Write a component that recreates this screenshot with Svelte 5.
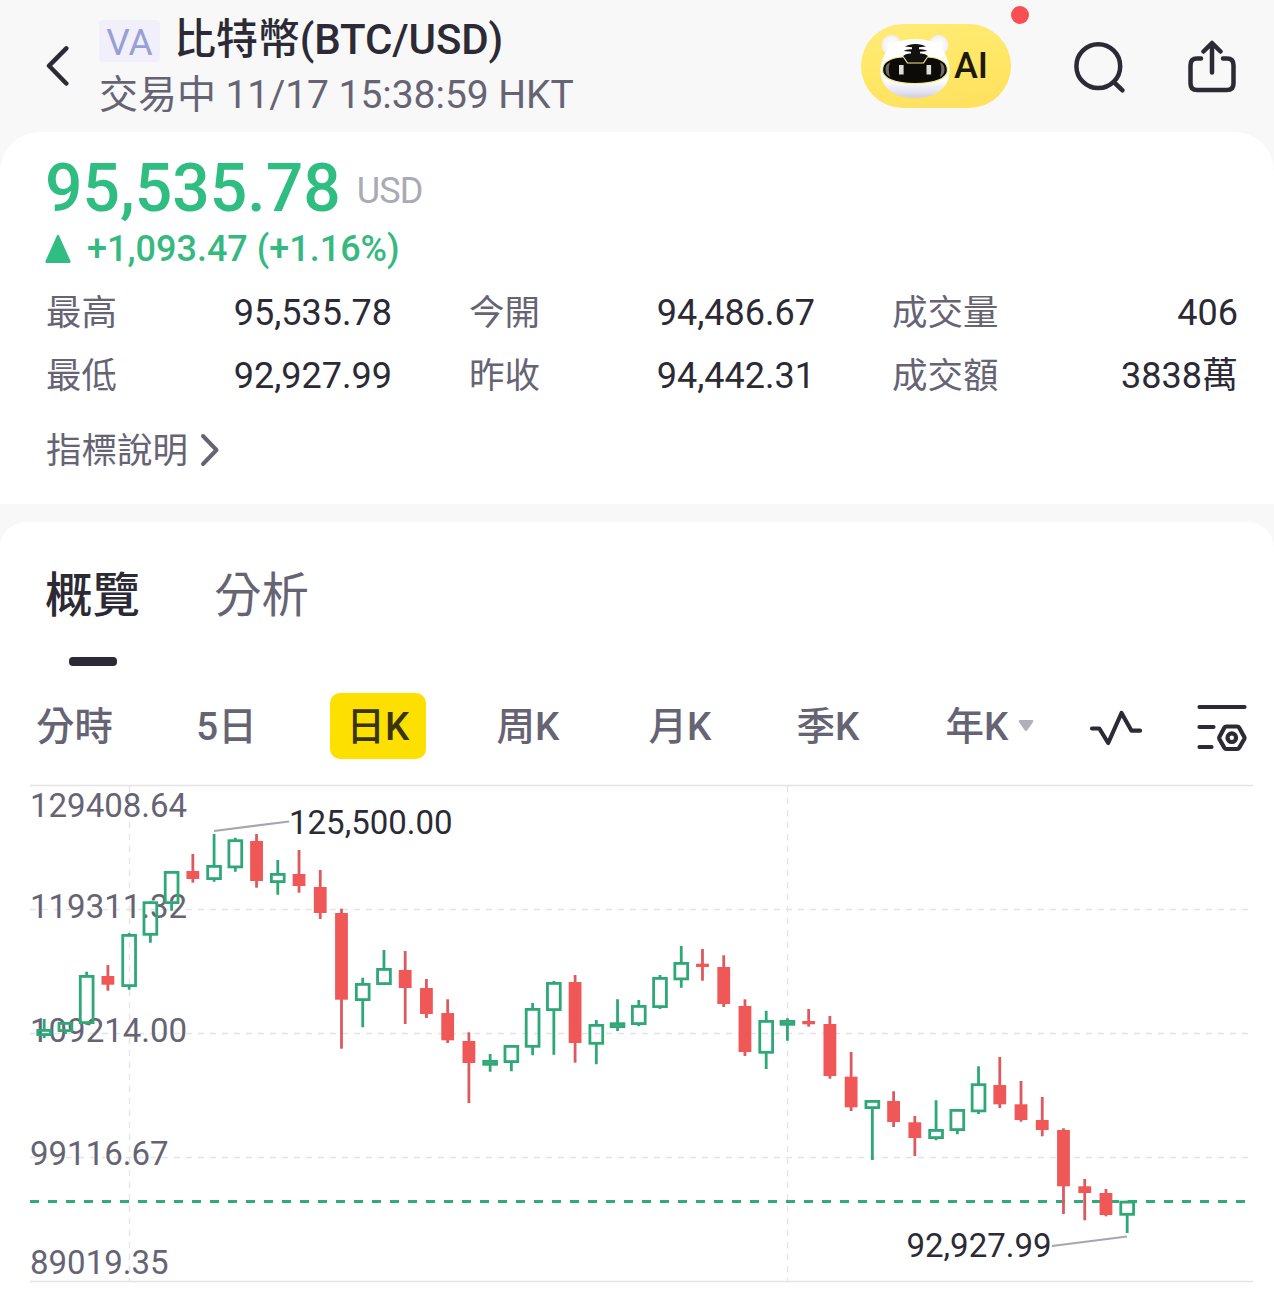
<script>
  const stats = [
    ['最高', '95,535.78'],
    ['今開', '94,486.67'],
    ['成交量', '406'],
    ['最低', '92,927.99'],
    ['昨收', '94,442.31'],
    ['成交額', '3838萬'],
  ];

  const periods = ['分時', '5日', '日K', '周K', '月K', '季K', '年K'];
  let period = $state('日K');

  const tabs = ['概覽', '分析'];
  let tab = $state('概覽');

  // u/d, high, body top, body bottom, low
  const candles = [
    ['u', 1019, 1029, 1036, 1038],
    ['u', 1022, 1022, 1032, 1034],
    ['u', 971.7, 975, 1024, 1025],
    ['d', 965, 976, 984.7, 990.7],
    ['u', 933, 934, 987, 989.7],
    ['u', 901.3, 901.3, 935.7, 942.7],
    ['u', 871, 871, 904, 910.7],
    ['d', 854, 871, 879, 882.7],
    ['u', 834, 865, 880, 881.7],
    ['u', 837.7, 839.3, 868.3, 871.7],
    ['d', 834, 841, 881, 887.7],
    ['u', 860, 873, 883, 894.7],
    ['d', 850, 874, 886, 892.7],
    ['d', 870, 887, 913, 919],
    ['d', 908.7, 913, 999.7, 1048.7],
    ['u', 977.7, 983, 1001, 1027.3],
    ['u', 950, 968, 985, 985],
    ['d', 951, 970, 988, 1024],
    ['d', 979, 988, 1014, 1018],
    ['d', 999.3, 1013, 1040.3, 1043],
    ['d', 1032.3, 1041, 1063, 1103],
    ['u', 1054, 1060, 1065.7, 1071.7],
    ['u', 1045, 1045, 1063, 1071.3],
    ['u', 1003, 1008, 1047.7, 1055.3],
    ['u', 981, 982, 1011, 1054.7],
    ['d', 975, 982, 1043, 1062.7],
    ['u', 1020, 1024, 1044.7, 1064.3],
    ['u', 999.3, 1022.3, 1028, 1031],
    ['u', 1000, 1005, 1025, 1026.3],
    ['u', 975, 977, 1008, 1009],
    ['u', 946, 962, 980.3, 987.7],
    ['d', 949, 963.7, 967, 980.7],
    ['d', 955.3, 967, 1004, 1007],
    ['d', 999.3, 1006, 1052, 1056],
    ['u', 1010.7, 1020, 1053.7, 1069],
    ['u', 1018.3, 1020, 1025.7, 1040.7],
    ['d', 1009, 1021, 1024.3, 1026.7],
    ['d', 1016, 1024, 1076, 1078.7],
    ['d', 1052, 1076.7, 1107.3, 1111],
    ['u', 1100, 1100, 1109, 1160],
    ['d', 1091.3, 1101, 1122, 1127],
    ['d', 1116, 1122.3, 1138, 1156],
    ['u', 1100.3, 1129, 1139, 1140.3],
    ['u', 1109, 1109, 1131, 1134.3],
    ['u', 1066.3, 1083.3, 1112.3, 1114],
    ['d', 1057, 1085, 1104.3, 1108],
    ['d', 1081, 1104.3, 1120, 1121.7],
    ['d', 1097, 1120, 1130, 1136.3],
    ['d', 1128.3, 1130, 1186.3, 1214],
    ['d', 1179, 1186.3, 1193, 1220.3],
    ['d', 1189, 1193, 1215, 1216.3],
    ['u', 1200.7, 1200.7, 1215.7, 1233],
  ].map(([dir, high, top, bottom, low], i) => ({ dir, high, top, bottom, low, x: 44.2 + i * 21.235 }));

  const axis = [
    ['129408.64', 817],
    ['119311.32', 918],
    ['109214.00', 1042],
    ['99116.67', 1165],
    ['89019.35', 1274],
  ];
</script>

<div class="page">
  <header>
    <svg class="back" width="24" height="42" viewBox="0 0 24 42"><path d="M20.300 3.300 3 20.800 20.300 38.500" /></svg>
    <div class="titles">
      <div class="title"><span class="badge">VA</span><h1>比特幣(BTC/USD)</h1></div>
      <div class="status">交易中 11/17 15:38:59 HKT</div>
    </div>
    <button class="ai" aria-label="AI">
      <svg width="76" height="70" viewBox="0 0 76 70">
        <defs>
          <linearGradient id="head" x1="0" y1="0" x2="0" y2="1">
            <stop offset="0.7" stop-color="#fff" />
            <stop offset="0.88" stop-color="#e6e5f3" />
            <stop offset="1" stop-color="#d3d0de" />
          </linearGradient>
          <radialGradient id="ear">
            <stop offset="0.3" stop-color="#fff" />
            <stop offset="1" stop-color="#efedf2" />
          </radialGradient>
        </defs>
        <circle cx="13.500" cy="14" r="10" fill="url(#ear)" />
        <circle cx="60.500" cy="14" r="10" fill="url(#ear)" />
        <path d="M37 8C53 8 64 13 68 25C72 33 72.500 42 70 49C65 61 54 67 37 67S9 61 4 49C1.500 42 2 33 6 25C10 13 21 8 37 8Z" fill="url(#head)" />
        <path d="M24 26H50C62 27 69.500 31 69.500 39C69.500 48 56 52.500 37 52.500S4.500 48 4.500 39C4.500 31 12 27 24 26Z" fill="#0c0b08" stroke="#f6ee8c" stroke-width="1.200" />
        <path d="M12 31.500Q7.500 33 7.500 38.500T12 46Q9.500 38 12 31.500ZM62 31.500Q66.500 33 66.500 38.500T62 46Q64.500 38 62 31.500Z" fill="#6d6c68" />
        <path d="M25.500 25 29.500 32H45.500L49.500 25Z" fill="#fff" />
        <path d="M25.500 26 29.500 32H45.500L49.500 26" fill="#0c0b08" stroke="#f6ee8c" stroke-width="1.200" />
        <path d="M27 15.500Q31 13 37.500 13T48 15.500L41 16.300V18.300Q46 17.800 49.500 20L42 20.800V22.500Q47 22 50 25L44.500 30H30.500L25 25Q28 22 33 22.500V20.800L25.500 20Q29 17.800 34 18.300V16.300Z" fill="#121110" />
        <rect x="21" y="34" width="4.600" height="9.500" fill="#dcdcd8" />
        <rect x="48.500" y="34" width="4.600" height="9.500" fill="#dcdcd8" />
      </svg>
      <span>AI</span>
      <i class="dot"></i>
    </button>
    <svg class="search" width="56" height="56" viewBox="0 0 56 56"><circle cx="25.300" cy="25.200" r="21.900" /><path d="M41.300 41.500 49.500 49.300" /></svg>
    <svg class="share" width="50" height="56" viewBox="0 0 50 56">
      <path d="M14 18.500H10Q3.500 18.500 3.500 25V43.500Q3.500 50 10 50H40Q46.500 50 46.500 43.500V25Q46.500 18.500 40 18.500H36" />
      <path d="M25 32.500V4M16.500 11.500 25 3 33.500 11.500" />
    </svg>
  </header>

  <section class="quote">
    <div class="price"><strong>95,535.78</strong><span>USD</span></div>
    <div class="change">
      <svg width="26" height="29" viewBox="0 0 26 29"><path d="M12 1.500Q13 0 14 1.500L25.500 27Q26 29 24 29H2Q0 29 .5 27Z" /></svg>
      +1,093.47 (+1.16%)
    </div>
    <dl>
      {#each stats as [label, value]}
        <div><dt>{label}</dt><dd>{value}</dd></div>
      {/each}
    </dl>
    <div class="note">
      <span>指標說明</span>
      <svg width="20" height="34" viewBox="0 0 20 34"><path d="M3 3 16.500 17 3 31" /></svg>
    </div>
  </section>

  <section class="detail">
    <nav class="tabs">
      {#each tabs as name}
        <button class:active={tab === name} onclick={() => (tab = name)}>{name}</button>
      {/each}
    </nav>

    <div class="toolbar">
      <div class="periods">
        {#each periods as name}
          <button class:active={period === name} onclick={() => (period = name)}>
            {name}{#if name === '年K'}<svg class="caret" width="16" height="13" viewBox="0 0 16 13"><path d="M2 1H14Q16 1 15 3L9.500 11Q8 13 6.500 11L1 3Q0 1 2 1Z" /></svg>{/if}
          </button>
        {/each}
      </div>
      <svg class="tool pulse" width="56" height="40" viewBox="0 0 56 40"><path d="M4 20.500H11.300L20.200 35 33.500 5 43.500 22.700H52" /></svg>
      <svg class="tool settings" width="52" height="50" viewBox="0 0 52 50">
        <path d="M3.500 5H48.500M3.500 25H17.500M3.500 45H15.500" />
        <path d="M30.500 24.500H41Q42.500 24.500 43.200 25.800L48.300 35Q48.800 36 48.300 37L43.200 45.800Q42.500 47 41 47H30.500Q29 47 28.300 45.800L23.400 37Q22.900 36 23.400 35L28.300 25.800Q29 24.500 30.500 24.500Z" />
        <circle cx="35.800" cy="35.700" r="4.300" />
      </svg>
    </div>

    <svg class="chart" width="1274" height="507" viewBox="0 784 1274 507">
      <g class="grid">
        <path class="solid" d="M30 785.500H1253M30 1281.500H1253" />
        <path d="M30 909.500H1248M30 1033.500H1248M30 1157.500H1248" />
        <path d="M129.500 786V1281M787.500 786V1281" />
      </g>
      {#each axis as [label, y]}
        <text x="30" {y}>{label}</text>
      {/each}
      <path class="last" d="M30 1201.500H1246" />
      {#each candles as c}
        <g class={c.dir}>
          {#if c.dir === 'u'}
            <path d="M{c.x} {c.high}V{c.top + 1}M{c.x} {c.bottom - 1}V{c.low}" />
            <rect x={c.x - 6.4} y={c.top + 1.4} width="12.800" height={c.bottom - c.top - 2.8} />
          {:else}
            <path d="M{c.x} {c.high}V{c.low}" />
            <rect x={c.x - 6.4} y={c.top} width="12.800" height={c.bottom - c.top} />
          {/if}
        </g>
      {/each}
      <path class="leader" d="M214 831 289 821.500M1052 1246 1127 1236.500" />
      <text class="mark" x="289" y="834">125,500.00</text>
      <text class="mark" x="906.500" y="1257">92,927.99</text>
    </svg>
  </section>
</div>

<style>
  :global(body) {
    margin: 0;
    background: #f8f8f9;
  }
  .page {
    width: 1274px;
    height: 1291px;
    overflow: hidden;
    font-family: Roboto, 'Noto Sans CJK TC', sans-serif;
    color: #2b2a35;
  }
  button {
    padding: 0;
    border: 0;
    background: none;
    font: inherit;
    color: inherit;
  }
  svg {
    flex: none;
    fill: none;
    stroke-linecap: round;
    stroke-linejoin: round;
  }

  header {
    display: flex;
    align-items: flex-start;
    height: 132px;
  }
  .back,
  .search,
  .share {
    stroke: #2b2a35;
    stroke-width: 4.5;
  }
  .back {
    margin: 45px 0 0 46px;
  }
  .titles {
    width: 762px;
    margin: 15px 0 0 29px;
  }
  .title {
    display: flex;
    align-items: center;
    height: 52px;
  }
  .badge {
    width: 61px;
    height: 42px;
    border-radius: 4px;
    background: #f1f0fa;
    font-size: 37px;
    line-height: 46px;
    text-align: center;
    color: #979fd6;
  }
  h1 {
    margin: 0 0 3px 14px;
    font-size: 42px;
    font-weight: 500;
    line-height: 50px;
    letter-spacing: -0.1px;
  }
  .status {
    font-size: 39px;
    line-height: 56px;
    letter-spacing: -0.05px;
    color: #666474;
  }
  .ai {
    position: relative;
    display: flex;
    align-items: center;
    box-sizing: border-box;
    width: 150px;
    height: 84px;
    margin-top: 24px;
    padding-left: 17px;
    border-radius: 42px;
    background: linear-gradient(170deg, #ffec78, #ffe766 50%, #ffdf5e);
    font-size: 36px;
    font-weight: 500;
    color: #1d1a0c;
  }
  .dot {
    position: absolute;
    top: -18px;
    right: -18px;
    width: 18px;
    height: 18px;
    border-radius: 50%;
    background: #fa4f52;
  }
  .search {
    margin: 41px 0 0 62px;
  }
  .share {
    margin: 40px 0 0 58px;
  }

  .quote {
    box-sizing: border-box;
    height: 372px;
    padding: 28px 36px 0 45px;
    border-radius: 40px 40px 0 0;
    background: #fff;
  }
  .price {
    display: flex;
    align-items: center;
    height: 56px;
    color: #2fbd81;
  }
  .price strong {
    margin-top: 2px;
    font-size: 66px;
    font-weight: 500;
    line-height: 58px;
  }
  .price span {
    margin: 6px 0 0 16px;
    font-size: 36px;
    letter-spacing: -0.8px;
    color: #aaaab4;
  }
  .change {
    display: flex;
    align-items: center;
    gap: 16px;
    height: 40px;
    margin-top: 13px;
    font-size: 36px;
    font-weight: 500;
    color: #35b97f;
  }
  .change svg {
    margin-bottom: 2px;
    fill: #2fbd81;
  }
  dl {
    display: grid;
    grid-template-columns: repeat(3, 346px);
    column-gap: 77px;
    grid-auto-rows: 63px;
    margin: 13px 0 0 1px;
    font-size: 36px;
    line-height: 63px;
  }
  dl div {
    display: flex;
    justify-content: space-between;
  }
  dt,
  .note {
    color: #666474;
  }
  dt {
    font-size: 35.500px;
  }
  dd {
    margin: 0;
  }
  .note {
    display: flex;
    align-items: center;
    gap: 12px;
    height: 50px;
    margin: 17px 0 0 1px;
    font-size: 35.500px;
  }
  .note span {
    margin-bottom: 5px;
  }
  .note svg {
    stroke: #666474;
    stroke-width: 4;
  }

  .detail {
    margin-top: 18px;
    border-radius: 26px 26px 0 0;
    background: #fff;
  }
  .tabs {
    display: flex;
    gap: 74px;
    height: 144px;
    padding-left: 45px;
  }
  .tabs button {
    display: flex;
    flex-direction: column;
    align-items: center;
    padding-top: 44px;
    font-size: 47.500px;
    line-height: 60px;
    color: #666474;
  }
  .tabs .active {
    font-weight: 500;
    color: #2b2a35;
  }
  .tabs .active::after {
    content: '';
    width: 48px;
    height: 9px;
    margin-top: 31px;
    border-radius: 4px;
    background: #2b2a35;
  }
  .toolbar {
    display: flex;
    height: 118px;
  }
  .periods {
    display: grid;
    grid-template-columns: 149px 155px 148px 152px 152px 144px 154px;
    justify-items: center;
    align-items: start;
    padding-top: 27px;
  }
  .periods button {
    display: flex;
    align-items: center;
    justify-content: center;
    box-sizing: border-box;
    height: 66px;
    padding-bottom: 7px;
    font-size: 38.500px;
    font-weight: 500;
    color: #666474;
  }
  .periods .active {
    width: 96px;
    border-radius: 10px;
    background: #fde000;
    color: #3a340c;
  }
  .caret {
    margin: 6px -26px 0 10px;
    fill: #b0b0ba;
  }
  .tool {
    stroke: #2b2a35;
    stroke-width: 4.2;
  }
  .pulse {
    margin: 42px 0 0 34px;
  }
  .settings {
    margin: 36px 0 0 52px;
  }

  .chart {
    display: block;
    stroke-linecap: butt;
    stroke-linejoin: miter;
  }
  .grid {
    stroke: #e4e4e8;
    stroke-width: 1.3;
    stroke-dasharray: 6 6;
  }
  .grid .solid {
    stroke-dasharray: none;
  }
  .last {
    stroke: #2fab77;
    stroke-width: 3;
    stroke-dasharray: 9 9;
  }
  .u {
    stroke: #2ea877;
    stroke-width: 2.8;
  }
  .d {
    stroke: #dc5a5f;
    stroke-width: 2.8;
  }
  .d rect {
    fill: #f05757;
    stroke: none;
  }
  .leader {
    stroke: #a6a6ae;
    stroke-width: 2.2;
  }
  text {
    font-size: 33px;
    fill: #666474;
  }
  .mark {
    fill: #2b2a35;
  }
</style>
